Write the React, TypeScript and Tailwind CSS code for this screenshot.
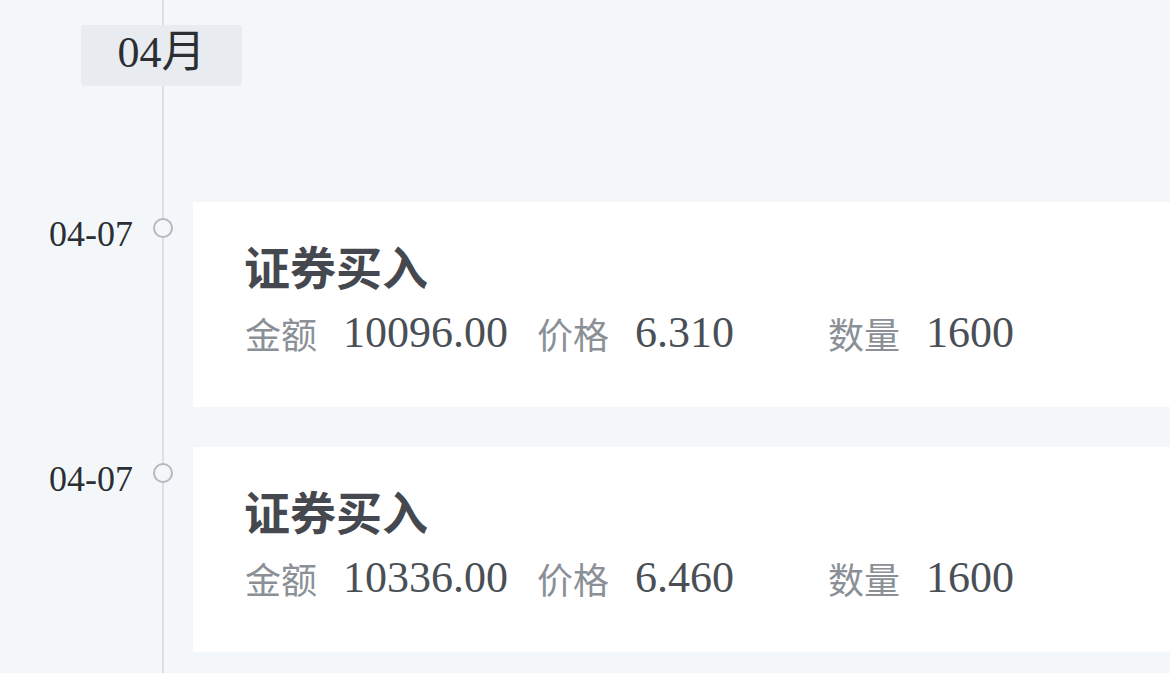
import React from "react";

const serif = { fontFamily: '"Liberation Serif", "Noto Sans CJK SC", serif' };

type Item = { amount: string; price: string; qty: string };

const items: Item[] = [
  { amount: "10096.00", price: "6.310", qty: "1600" },
  { amount: "10336.00", price: "6.460", qty: "1600" },
];

function Field({ label, value }: { label: string; value: string }) {
  return (
    <div className="flex items-center gap-[26px]">
      <span className="text-[36px] leading-none text-[#8a9096] font-['Noto_Sans_CJK_SC',sans-serif]">
        {label}
      </span>
      <span className="text-[44px] leading-none text-[#4a4f55] font-['Liberation_Serif',serif]">
        {value}
      </span>
    </div>
  );
}

function Row({ item }: { item: Item }) {
  return (
    <div className="flex">
      <div className="w-[133px] shrink-0 pt-[14px] text-right">
        <span className="text-[36px] leading-none text-[#2b2f34] font-['Liberation_Serif',serif] block">
          04-07
        </span>
      </div>
      <div className="w-[60px] shrink-0 pt-[16px] pl-[20px]">
        <div className="relative z-10 h-[20px] w-[20px] rounded-full border-[2.5px] border-[#b4b9be] bg-[#f4f7fa]" />
      </div>
      <div className="flex-1 h-[205px] bg-white pl-[51px] pt-[40px]">
        <div className="text-[46px] leading-none font-bold text-[#45494f] font-['Noto_Sans_CJK_SC',sans-serif]">
          证券买入
        </div>
        <div className="mt-[23px] ml-[1px] grid grid-cols-[292px_291px_292px]">
          <Field label="金额" value={item.amount} />
          <Field label="价格" value={item.price} />
          <Field label="数量" value={item.qty} />
        </div>
      </div>
    </div>
  );
}

export default function App() {
  return (
    <div className="relative h-[673px] w-full overflow-hidden bg-[#f4f7fa]" style={serif}>
      <div className="absolute left-[162px] top-0 h-full w-[2px] bg-[#dcdfe3]" />
      <div className="relative pt-[25px]">
        <div className="ml-[81px] flex h-[61px] w-[161px] items-center justify-center rounded-[4px] bg-[#e8ebef] pb-[6px]">
          <span className="text-[44px] leading-none text-[#2b2f34] font-['Liberation_Serif','Noto_Sans_CJK_SC',serif]">
            04月
          </span>
        </div>
        <div className="mt-[116px] flex flex-col gap-[40px]">
          {items.map((it, i) => (
            <Row key={i} item={it} />
          ))}
        </div>
      </div>
    </div>
  );
}
